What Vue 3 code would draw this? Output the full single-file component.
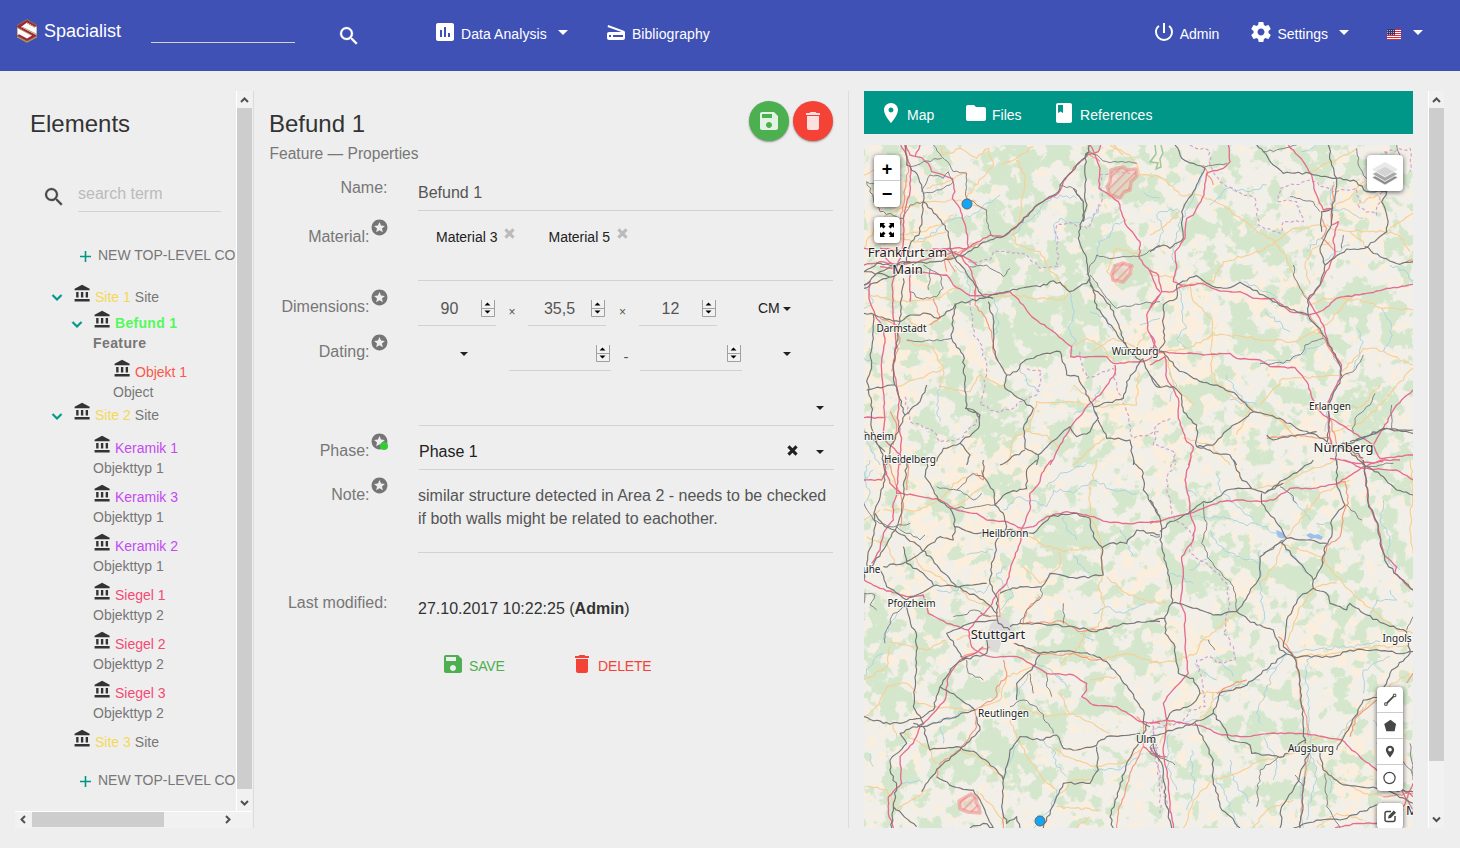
<script setup>
import { h } from 'vue'

const paths = {
  search: 'M15.5 14h-.79l-.28-.27A6.471 6.471 0 0 0 16 9.5 6.5 6.5 0 1 0 9.5 16c1.61 0 3.09-.59 4.23-1.57l.27.28v.79l5 4.99L20.49 19l-4.99-5zm-6 0C7.01 14 5 11.99 5 9.5S7.01 5 9.5 5 14 7.01 14 9.5 11.99 14 9.5 14z',
  chart: 'M19 3H5c-1.1 0-2 .9-2 2v14c0 1.1.9 2 2 2h14c1.1 0 2-.9 2-2V5c0-1.1-.9-2-2-2zM9 17H7v-7h2v7zm4 0h-2V7h2v10zm4 0h-2v-4h2v4z',
  scanner: 'M19.8 10.7L4.2 5l-.7 1.9L17.6 12H5c-1.1 0-2 .9-2 2v4c0 1.1.9 2 2 2h14c1.1 0 2-.9 2-2v-5.5c0-.8-.5-1.6-1.2-1.8zM7 17H5v-2h2v2zm12 0H9v-2h10v2z',
  power: 'M13 3h-2v10h2V3zm4.83 2.17l-1.42 1.42A6.92 6.92 0 0 1 19 12c0 3.87-3.13 7-7 7A6.995 6.995 0 0 1 7.58 6.58L6.17 5.17A8.932 8.932 0 0 0 3 12a9 9 0 0 0 18 0c0-2.74-1.23-5.18-3.17-6.83z',
  gear: 'M19.43 12.98c.04-.32.07-.64.07-.98s-.03-.66-.07-.98l2.11-1.65c.19-.15.24-.42.12-.64l-2-3.46c-.12-.22-.39-.3-.61-.22l-2.49 1c-.52-.4-1.08-.73-1.69-.98l-.38-2.65A.488.488 0 0 0 14 2h-4c-.25 0-.46.18-.49.42l-.38 2.65c-.61.25-1.17.59-1.69.98l-2.49-1c-.23-.09-.49 0-.61.22l-2 3.46c-.13.22-.07.49.12.64l2.11 1.65c-.04.32-.07.65-.07.98s.03.66.07.98l-2.11 1.65c-.19.15-.24.42-.12.64l2 3.46c.12.22.39.3.61.22l2.49-1c.52.4 1.08.73 1.69.98l.38 2.65c.03.24.24.42.49.42h4c.25 0 .46-.18.49-.42l.38-2.65c.61-.25 1.17-.59 1.69-.98l2.49 1c.23.09.49 0 .61-.22l2-3.46c.12-.22.07-.49-.12-.64l-2.11-1.65zM12 15.5c-1.93 0-3.5-1.57-3.5-3.5s1.57-3.5 3.5-3.5 3.5 1.57 3.5 3.5-1.57 3.5-3.5 3.5z',
  museum: 'M4 10v7h3v-7H4zm6 0v7h3v-7h-3zM2 22h19v-3H2v3zm14-12v7h3v-7h-3zm-4.5-9L2 6v2h19V6l-9.500-5z',
  plus: 'M19 13h-6v6h-2v-6H5v-2h6V5h2v6h6v2z',
  chevron: 'M7.410 7.840L12 12.420l4.590-4.580L18 9.250l-6 6-6-6z',
  save: 'M17 3H5c-1.110 0-2 .9-2 2v14c0 1.100.89 2 2 2h14c1.100 0 2-.9 2-2V7l-4-4zm-5 16c-1.660 0-3-1.340-3-3s1.340-3 3-3 3 1.340 3 3-1.340 3-3 3zm3-10H5V5h10v4z',
  trash: 'M6 19c0 1.100.9 2 2 2h8c1.100 0 2-.9 2-2V7H6v12zM19 4h-3.500l-1-1h-5l-1 1H5v2h14V4z',
  star: 'M11.990 2C6.470 2 2 6.480 2 12s4.470 10 9.990 10C17.520 22 22 17.520 22 12S17.520 2 11.990 2zm4.240 16L12 15.450 7.770 18l1.120-4.810-3.730-3.230 4.920-.42L12 5l1.920 4.530 4.920.42-3.730 3.230L16.230 18z',
  pin: 'M12 2C8.130 2 5 5.130 5 9c0 5.250 7 13 7 13s7-7.750 7-13c0-3.870-3.130-7-7-7zm0 9.500a2.500 2.500 0 0 1 0-5 2.500 2.500 0 0 1 0 5z',
  folder: 'M10 4H4c-1.100 0-1.990.9-1.990 2L2 18c0 1.100.9 2 2 2h16c1.100 0 2-.9 2-2V8c0-1.100-.9-2-2-2h-8l-2-2z',
  book: 'M18 2H6c-1.100 0-2 .9-2 2v16c0 1.100.9 2 2 2h12c1.100 0 2-.9 2-2V4c0-1.100-.9-2-2-2zM6 4h5v8l-2.500-1.500L6 12V4z',
  cross: 'M2.500 6.500l4-4L12 8l5.500-5.500 4 4L16 12l5.500 5.500-4 4L12 16l-5.500 5.500-4-4L8 12z',
}

const Icon = (p) =>
  h('svg', { viewBox: '0 0 24 24', width: p.size, height: p.size, fill: 'currentColor' }, [h('path', { d: paths[p.name] })])
Icon.props = ['name', 'size']

const Caret = (p) =>
  h('svg', { viewBox: '0 0 10 5', width: p.w || 8, height: p.hh || 4, fill: 'currentColor' }, [h('path', { d: 'M0 0h10L5 5z' })])
Caret.props = ['w', 'hh']

const Spinner = () =>
  h('svg', { viewBox: '0 0 14 17', width: 14, height: 17, class: 'spin-svg' }, [
    h('path', { d: 'M0 0h14v17H0z', fill: '#f2f2f2' }),
    h('path', { d: 'M.5 0v16.500h13V0M0 8.500h14', fill: 'none', stroke: '#a0a0a0' }),
    h('path', { d: 'M3.500 5.500h6L6.500 2.500zM3.500 10.500h6l-3 3z', fill: '#000' }),
  ])

const tree = [
  { name: 'Site 1', type: 'Site', color: 'yellow', level: 1, open: true, gap: 'g6' },
  { name: 'Befund 1', type: 'Feature', color: 'green', level: 2, open: true, two: true, active: true },
  { name: 'Objekt 1', type: 'Object', color: 'red', level: 3, two: true, gap: 'g3' },
  { name: 'Site 2', type: 'Site', color: 'yellow', level: 1, open: true, gap: 'g13' },
  { name: 'Keramik 1', type: 'Objekttyp 1', color: 'purple', level: 2, two: true },
  { name: 'Keramik 3', type: 'Objekttyp 1', color: 'purple', level: 2, two: true },
  { name: 'Keramik 2', type: 'Objekttyp 1', color: 'purple', level: 2, two: true },
  { name: 'Siegel 1', type: 'Objekttyp 2', color: 'pink', level: 2, two: true },
  { name: 'Siegel 2', type: 'Objekttyp 2', color: 'pink', level: 2, two: true },
  { name: 'Siegel 3', type: 'Objekttyp 2', color: 'pink', level: 2, two: true },
  { name: 'Site 3', type: 'Site', color: 'yellow', level: 1 },
]

// Woodland patches of the map: centre x, centre y, radius x, radius y
const woods = [
  [1010,170,30,25],[1060,155,35,15],[1100,170,20,25],[980,230,25,15],[1020,215,25,15],[1010,250,35,20],[1055,270,30,25],[1085,225,22,25],[1110,240,20,30],
  [1045,310,45,30],[1080,320,25,25],[1030,345,40,25],[910,195,15,15],[930,272,15,10],[960,300,20,15],[990,310,20,20],[960,380,20,30],[985,400,20,20],[1000,430,30,20],
  [930,430,20,25],[915,345,20,20],[1075,440,30,20],[1140,190,25,20],[1140,270,20,20],[1095,350,20,20],[890,155,20,12],[940,160,15,12],
  [1215,165,30,15],[1290,150,35,12],[1340,165,30,15],[1390,180,20,15],[1400,250,12,25],[1235,225,20,15],[1270,240,30,20],[1195,230,20,15],[1355,300,30,20],[1380,320,30,20],
  [1230,265,25,15],[1245,325,30,15],[1300,300,20,15],[1260,350,30,15],[1320,345,25,12],[1210,385,20,12],[1290,400,25,15],[1370,400,30,20],[1380,430,25,20],[1200,420,20,20],
  [1250,440,20,12],[1395,470,15,20],[880,640,16,50],[890,690,25,30],[945,505,20,14],[1070,530,35,20],[1060,560,35,20],[1090,570,20,12],[1080,640,50,18],[1050,650,30,12],
  [970,690,35,18],[925,640,15,35],[1000,745,40,20],[955,765,35,18],[900,790,25,20],[1050,720,25,15],[1030,775,25,20],[1100,700,30,15],[1090,790,25,20],[1010,480,20,12],
  [1135,650,20,20],[1200,510,30,18],[1175,560,15,30],[1210,580,22,18],[1250,560,20,15],[1290,580,28,18],[1330,560,25,15],[1370,520,25,25],[1400,560,12,20],[1230,620,25,15],
  [1340,610,20,20],[1240,670,20,15],[1250,730,30,18],[1300,740,22,14],[1290,700,20,15],[1200,765,20,12],[1280,790,20,15],[1350,680,15,12],[1240,800,10,20],[1370,625,20,12],
  [1330,780,14,25],[1130,500,20,15],[1120,540,15,15],[1150,600,18,14],[1260,500,18,12],[1310,500,18,12],
]

const farms = [
  [900,230,40,50],[900,320,40,60],[960,360,30,25],[990,470,60,40],[960,520,50,50],[1165,440,25,40],[1110,420,30,30],[1190,370,30,50],[1180,300,30,30],[1150,340,25,25],
  [1260,300,40,20],[1290,360,40,15],[1350,210,30,25],[1250,590,25,20],[1240,440,30,15],[1320,430,30,20],[1360,640,30,30],[1320,640,30,25],[1030,600,40,20],[1000,560,50,30],
  [920,590,25,30],[1040,670,30,20],[1190,700,20,20],[1350,770,25,40],[890,480,25,40],[1180,640,30,20],[890,400,25,40],[1140,580,25,20],[1330,510,25,15],[1100,140,20,20],
]

// Line work, drawn tile by tile at three units per pixel
const tiles = [
  {
    place: 'translate(860 85) scale(.33333)',
    water: 'M170 470L210 455 240 425 270 405 330 395 420 330M283 540L300 560 320 570 330 640 370 640M405 640L415 720 400 760M455 450L500 410 560 350 600 330 650 340M585 470L580 420 600 400 640 415 700 400 725 360M630 620L640 690 625 730 645 760 640 800M710 520L715 470 750 455 765 415 800 405M480 850L500 890 540 920M240 900L230 960 240 1010M12 820L50 835M900 340L850 320M690 680L740 700 760 740M15 600L40 650 12 670M840 720L900 700M12 1030L35 1100 60 1140M640 990L700 960 720 900',
    border: 'M325 530L390 525 400 500 450 500 500 510 540 550 595 545 590 420 640 415 680 430 725 350 720 270 780 260 830 270M330 650L340 750 365 780 380 850 360 960 410 980 460 970 480 950 530 930 545 860 500 850M660 800L680 880 760 850 770 900 785 950 800 980 820 1060 900 1040M135 935L150 1010 220 1040 240 1070 300 1060 360 1000',
    primary: 'M240 180L250 210 300 190 350 220 385 190 400 240 365 280 340 310 320 340M425 240L470 220 520 185M470 225L495 270 480 400 460 440 470 480 540 500 560 540 600 590 630 620M12 490L60 400 120 370 200 350 300 345 350 350M200 310L260 290 320 260M12 270L60 250 130 240M340 360L380 375M120 450L180 440 240 420 280 390M395 640L470 630 540 640 610 645 630 620M30 630L120 650 230 640 300 600M140 770L220 790 250 850 180 880 110 905M250 855L240 905 330 920 360 870 440 910M635 785L680 760 720 780 765 830M700 800L760 760 830 790 860 740M440 1140L460 1060 510 1030 530 950 620 950 700 960M835 860L830 960 770 960 700 965M735 1060L680 1100 640 1140M840 510L770 490 740 560 770 600M750 180L810 210 830 235 840 270 900 275M495 1040L560 1050 600 1090M760 180L790 210M640 900L690 940 720 950M140 700L180 730 235 705M70 480L100 460 180 470 260 440',
    trunk: 'M250 490L225 500M220 640L240 700 210 720M350 600L345 660 370 690 395 740 400 800 415 830M285 560L260 520 300 500 370 470M60 700L110 720 120 760 95 860M135 180L145 250 120 420M685 180L690 210 720 230M90 980L110 1020 100 1080M260 560L255 520 285 520',
    rail: 'M135 180L140 240 165 260 185 300 190 350 230 390 265 440 270 490 285 520 340 590 370 635 400 640M285 520L390 465 430 455 470 425 525 365 595 320 600 300 650 240 688 200M12 600L60 560 130 530 200 535 280 520M12 560L50 535 100 540 150 530M12 610L80 580 130 560M688 180L675 240 678 370 665 410 655 460 680 520 685 570 700 620 710 670 760 730 800 785 830 820 850 825 870 870 900 905M235 700L295 655 370 640 440 620 510 605 560 600 570 590 600 592 628 620 680 595 690 575M12 685L45 690 120 710 150 690 200 685 235 700M130 580L120 710 100 850 105 900 135 990 90 1090 80 1140M40 690L40 760 30 810 35 850 20 890 35 950 35 1030 60 1090 75 1140M190 350L180 440 150 480 140 530M12 560L100 575M385 650L400 700 400 780 410 820 440 870 435 910 520 970 490 1030 495 1090 535 1110 570 1075 630 1025 650 1055 690 1040 715 1000 700 965 665 900 655 875 620 870 600 800 540 810 490 830 470 860 440 870M285 655L275 760 310 810 318 970 360 990 355 1030 300 1075 330 1110 320 1140M315 970L340 975 360 1000M700 965L790 940 800 890 850 820M700 965L740 1060 810 1065 820 1140M640 310L670 350 670 410M690 600L750 660 790 760 800 790M20 915L105 900M75 1100L12 1040M135 990L180 950 200 900M535 1110L530 1140M230 1130L250 1090 300 1075M420 1140L495 1095',
    minor: 'M220 180L245 215 270 240 280 260 320 265 320 340 380 375 385 430 400 455M600 300L640 310 670 350M680 570L710 510 760 520 800 515 850 510 900 480M690 570L740 640 770 670 850 655 900 650M690 200L740 230 830 235M140 765L220 768 275 760M150 620L180 640 230 635 250 610 240 570 190 540M185 320L210 270 250 280 265 260 280 290 250 310 190 325M60 300L20 290 40 340 60 380 130 400 150 360 190 350M330 545L380 540 410 560 430 575 450 550M205 615L210 550M245 220L190 230 150 245',
    motorway: 'M122 180L140 215 152 250 150 320 140 355 130 400 130 450 128 500 105 560 96 600 100 700 108 770 100 850 110 905 118 950 112 1000 125 1060 120 1140M138 180L150 210 185 218 205 235 215 260 250 270 277 280 285 320 277 340 300 370 318 430 325 485 300 510 330 550 348 600 345 630M180 180L165 215M60 490L150 500 265 490 320 490 390 450 430 455 480 415 530 360 595 325 610 290 650 240 685 208 715 200 722 180M690 180L705 210 720 250 717 310 775 350 795 415 840 470 838 520 870 560 890 610 900 620M60 545L150 560 210 565 260 570 280 600 330 632 400 628 450 620 490 660 515 695 580 740 635 785 632 815 740 815 760 835 850 830 900 800M765 840L765 865 720 930 690 955 630 1030 600 1080 570 1140M12 600L30 590 27 640 45 690 65 720 75 760 65 830 70 920 75 1000 70 1060 120 1110M12 998L75 998M900 630L880 650 860 690 865 740 885 770 880 800M12 540L60 530 130 540 290 500M250 490L320 520 350 540M150 650L150 560M12 490L60 500 120 560',
  },
  {
    place: 'translate(1150 85) scale(.33333)',
    water: 'M160 250L130 340 90 410 70 500 80 590M20 480L40 440 20 390 60 370 90 380M180 360L200 340 230 310 300 320 350 300M390 650L350 620 280 590M90 600L95 680 110 730 80 760 110 790M345 680L420 740M470 690L520 750 560 830 575 870 540 950 525 1040M330 830L420 830 480 790 530 770M620 730L640 770 610 860M695 670L725 720 720 770 700 800M520 530L560 500 600 480M540 380L580 370 640 400M240 945L320 960M720 540L770 560 789 600M230 870L250 910 300 970M60 860L80 900 60 950M560 960L620 970M550 290L540 360M470 500L520 450 540 430M560 1090L640 1060 690 1040M455 200L500 180',
    border: 'M120 180L180 200 180 240 210 290 260 320 315 340 325 420 390 445 400 410 460 410 440 350 385 350 390 310 480 285 550 320 620 310 630 370 680 390 690 330 740 250 700 200 780 190 780 260M60 1000L20 1020 10 1080 70 1100 75 1140',
    primary: 'M12 270L50 290 90 330 150 330 230 370 310 430 375 470 430 430 530 420 560 435 700 440 745 450 780 500M375 470L330 500 220 530 190 590 120 595M375 470L410 520 440 590 475 640M120 595L130 650 185 700 185 850 195 890M0 810L110 790 190 750 280 755 350 765 430 770 490 740 520 750M330 960L400 880 520 875 600 870M360 980L420 1040M300 970L260 1050M480 660L520 640 590 640 650 650 700 670 789 675M575 860L640 790 680 790 720 810 789 840M480 260L560 225 620 190M480 600L465 540 490 490 540 470M620 360L680 330 700 360M0 450L60 410 90 380M720 430L789 385M540 1040L640 1010 700 950 789 850M100 1060L180 1080 240 1140M540 370L600 340 640 290M195 890L260 940 310 975M600 440L640 470 645 490M0 570L70 575M490 740L540 710 600 640M45 810L70 900 130 960M310 975L400 1010 440 1060M560 980L640 960 690 900',
    trunk: 'M550 300L545 370 520 380M550 1090L540 1060 420 1050 350 1060M515 400L530 430 515 460 560 500M570 840L520 760 480 690M540 1000L560 1080 600 1090 640 1130M770 530L789 525M160 240L190 300M90 600L130 600',
    rail: 'M0 500L40 480 60 490 100 460 95 380 130 320 165 250 130 235 95 220 75 180M80 600L140 572 190 605 240 608 270 592 340 630 400 665 475 690 520 750 565 830 577 875 540 950 535 1040 530 1080M475 690L475 640 510 600 525 540 590 492 645 490 710 440 712 400 695 350 710 320 650 320 620 290 560 280 480 265 400 265 370 240 340 200 320 180M535 180L545 240 560 290 548 370 540 430 510 490 525 540M0 790L40 800 80 850 130 880 210 905 260 930 310 980 390 1000 440 1030 500 1050 550 1080 600 1075 700 1030 789 1035M0 870L20 905 70 905 95 930 100 980 140 1020 140 1085 190 1080 240 1030 310 980M140 1085L200 1105 240 1110 260 1140M80 600L80 640 40 660 40 720 45 770 25 800M645 485L690 515 750 538 789 530M550 1080L600 1100 640 1140M600 1070L640 1060 710 1030 789 1045M515 440L515 380 545 370M560 1090L560 1140M600 1090L640 1120M350 1050L370 1065 500 1040',
    minor: 'M420 335L490 350 510 380M580 450L575 490M430 540L430 570 450 610 475 645M330 835L400 835 460 800 465 780 520 760M577 875L610 860 640 810M610 1040L615 1000 660 960 675 925M620 190L625 240 650 280M340 200L380 195 440 180M740 180L750 210 740 260M725 1030L725 960M165 245L230 235',
    motorway: 'M235 180L240 230 220 250 170 265 162 330 130 390 110 400 105 460 75 500 80 550 70 590 100 605 155 595 210 618 270 620 310 640 370 640 420 680 475 690 520 675 560 640 650 625 720 610 789 598M415 180L460 230 485 270 495 320 520 375 540 370M545 370L545 420 565 410 550 460 555 510 540 540 510 600 475 645 495 680 520 720 545 800 575 840 570 880 535 950 535 1020 545 1090M0 555L25 570 35 620 70 620 95 605M0 670L35 620M25 800L110 805 160 810 200 808 240 805 260 820 330 825 360 845 435 848 470 890 495 960 520 990 540 1000 640 1060 670 1080 700 1030 740 960 789 915M0 750L20 790 0 800M0 840L45 815 50 880 85 940 85 1000 110 1070 130 1085 115 1140M670 1080L690 1120 789 1110M540 1120L620 1135 700 1130',
  },
  {
    place: 'translate(860 460) scale(.33333)',
    water: 'M30 0L12 40 30 100 12 130M410 410L430 380 410 340 440 320M420 450L460 410 440 370 410 400M430 150L480 110 560 140 580 90 640 100 700 60 760 90 830 100M560 80L600 40 680 10M610 170L620 210 650 240M640 290L690 340M780 210L800 250 820 290M700 460L740 440 790 460 860 430M230 390L270 400 310 380 370 400 390 370M320 285L400 270M70 540L90 490 130 430M12 650L40 600 70 580M470 710L510 630 530 610 600 650 620 680M190 800L280 770 340 740M240 800L250 850M480 840L460 880 430 960M540 840L580 870 590 920 620 950M120 970L180 960M700 930L770 930 850 880M12 60L40 30M700 540L660 520M580 640L610 660M30 880L40 920M590 990L570 1050 520 1104',
    border: 'M880 780L885 860 897 950 900 1060M870 870L900 860',
    primary: 'M710 0L690 90 690 160 720 240 730 340 715 380 735 440 715 500 670 520 660 560 600 610M70 150L180 150 240 120 280 70 350 40M470 200L540 250 610 275 700 260M490 320L540 370 600 320 600 275M740 350L800 400 870 430M12 660L80 620 90 560M90 545L200 570 260 540M160 280L190 330 240 350 280 390M12 770L50 740 80 680 140 670 170 700M170 730L230 740 340 750M350 750L420 720 440 650 520 620M450 780L470 830 500 890 550 960 590 990M480 740L560 770 640 760 700 790 750 820M630 760L600 700M130 820L200 860 230 910M20 980L80 990 110 1050M110 1050L200 990M590 1040L720 1050M580 860L620 890 700 920 790 910 840 870M360 1000L430 1080M700 960L640 960 600 1000M100 790L110 830M12 180L60 150M640 580L710 600 800 580 900 610M690 660L770 650M280 140L330 110 370 80M400 440L330 420 300 390M20 230L80 250 110 320M290 540L370 510M300 870L370 900 430 960M650 1104L690 1070',
    trunk: 'M85 0L110 80 130 130 120 200M145 0L140 90M350 40L370 60 365 30M415 400L420 470 390 470 360 460M490 490L500 450 540 410M480 490L610 485 655 515 760 500M460 550L530 580 590 585 640 580 700 600 740 600M430 600L440 650 410 680 410 710 345 750 350 800 300 870 240 910 230 950M300 590L340 580 390 560M430 1104L430 1060M850 860L810 940 795 1000 775 1050 770 1104M850 860L850 790 830 770',
    rail: 'M70 0L75 60 45 150 45 200 20 310M45 160L75 200 105 210 180 260 290 380 370 420 410 460 415 490 450 510M140 0L125 160 110 200 70 270 20 340M12 360L20 310M205 0L195 50 215 80 235 120 270 145 285 180 280 240 240 230 180 280 130 310 70 320M370 0L370 50 400 90 405 135 430 160 440 200 410 240 405 280 395 320 390 370 410 410 412 460M405 135L440 100 500 85 500 30 530 0M285 200L340 220 400 220M440 210L520 220 570 170 640 160 690 175 700 230 725 260 730 345 650 355 570 340 545 380 480 380 420 400M725 265L750 250 800 250 830 210 900 225M140 420L230 375 300 380 380 370M130 260L140 310 190 340 220 375M60 330L80 380 110 400 140 420M450 500L480 490 540 490 640 500 710 515 790 490 900 485M465 550L540 580 640 575 700 585 740 605 780 650 850 750 850 790 870 800M410 480L330 490 260 520 300 580 310 600 380 580 380 540M540 585L515 630 470 670 470 720M320 590L280 620 240 680 220 750 190 770 120 790 70 790 12 770M140 430L150 480 170 530 170 630 160 740 190 790 120 820 140 850 90 900 90 930 110 980 100 1040 95 1104M240 680L290 710 345 750 190 800 160 790M190 800L210 870 290 860 350 880 410 930 430 960 425 1040 440 1090 470 1070 480 1104M350 770L360 810 320 850 300 870 240 920 185 995M230 950L280 980 340 990 370 1040 400 1104M430 960L450 870 480 830 540 840 590 825 610 865 650 870 700 860 740 830 840 820M710 860L715 930 690 970 610 970 590 1010 550 1104M760 1104L750 1070 780 980 800 910 830 860 850 830 860 790M100 1040L170 1100M820 0L850 40 850 90 900 170M330 1104L370 1090 400 1104',
    minor: 'M12 130L40 180 90 200 150 190M110 200L180 240 195 225M140 440L100 460 80 510 75 550M12 400L45 405 30 435 50 450M230 80L290 90 340 120 365 100M290 90L340 40 370 50M270 145L350 140 405 135M280 470L310 465 340 450 390 470M610 430L610 490M545 380L545 410 500 450 480 490M510 640L520 700M560 640L560 680 575 710M320 600L325 640 370 660M450 740L490 720 530 740 570 800 580 820M12 480L15 400M850 850L880 840 870 880 900 900',
    motorway: 'M12 60L65 60 80 40 70 0M118 0L110 100 160 105 240 120 290 150 350 160 380 180 440 185 485 205 520 200 560 170 620 155 680 165 740 185 800 190 900 185M485 205L510 150 510 100 540 65 545 40 575 0M485 205L480 250 460 300 440 370 410 400 390 440 350 480 325 510 335 560 345 570M110 105L100 130 100 180 70 220 60 270 35 310M12 360L60 385 140 410 190 405 205 460 260 490 325 510M345 570L390 590 470 590 510 610 560 640 640 645 680 670 680 690 665 710 700 735 770 740 840 785 900 790M370 560L345 580 300 600 265 650 255 720 220 760 180 800 160 850 120 890 125 970 85 1010 85 1060 100 1104M850 860L890 890 900 885M75 30L90 70 125 100',
  },
  {
    place: 'translate(1150 460) scale(.33333)',
    water: 'M110 170L220 170 280 190 350 200 395 235M200 40L210 90 260 140 310 180M395 80L440 130 480 180M180 210L200 250 260 290 330 310M330 270L330 400 345 480M120 330L180 290M400 250L440 300 470 340M410 580L480 570 600 560 690 545M490 590L470 600 470 700 480 820 480 900 450 980 460 1104M350 640L390 610 410 585M380 620L320 760 330 790M190 720L250 680 330 660M135 610L170 640 200 660M60 820L50 900 80 990M700 120L690 180 720 230 715 300 750 330M640 700L640 630 720 590M720 390L740 420 680 420 660 460M480 880L500 920 490 990 470 1080M540 930L540 1000M0 820L60 790 150 780M200 590L250 650M240 900L250 960 300 1030M560 840L620 760 640 740M670 780L700 830 740 880M540 190L500 190M140 110L110 90M60 340L130 370M340 830L380 900 370 960M190 950L230 1010 260 1104M125 870L130 1000 110 1050',
    border: 'M75 0L50 60 65 160 90 190 130 220 120 280 180 320 230 370 240 430 220 520 250 560 255 600 200 610 180 590 140 600 160 680 165 740 120 750 90 790 20 800M10 800L20 890 30 950 60 1060',
    primary: 'M310 85L400 70 480 30 560 0M410 230L460 170 510 100 600 60M395 250L380 310 330 370M400 255L450 270 510 290 560 350 630 420 690 470 740 510M490 390L450 440 410 550M0 425L50 430M0 610L80 600 140 580 150 550 220 490 260 460M180 540L150 545M430 590L550 580 670 560 780 560M150 700L250 690 290 660M130 790L180 750 190 700M190 960L260 940 330 900 400 890 440 870M190 960L130 1020 100 1104M440 870L500 830M500 900L540 950 640 1000 700 1010M780 0L789 80 780 200 789 280M560 370L500 380 490 390M570 840L620 770 680 700 780 640M480 840L520 830 570 840M310 1104L350 1050 430 1020M640 1080L560 1060 500 1104M789 520L740 510M60 780L30 850',
    trunk: 'M560 70L585 65 595 130 580 160 570 230 530 260 520 310M385 530L410 555 440 600 450 660 450 720 470 770 475 830M475 880L460 980 450 1104M200 700L260 665 290 660M600 830L620 770 680 720M789 640L770 670M700 1010L789 1000',
    rail: 'M0 120L20 150 35 200 30 240 50 320 65 380 65 430 45 470 45 520 75 560 85 640 130 655 150 700 130 730 60 760 50 780M30 215L60 185 115 160 160 125 185 125 230 90 300 85 345 100 400 60 450 30 490 0M250 0L270 50 305 85M335 100L335 130 385 195 410 235 395 250 440 300 490 360 490 385 530 400 540 430 590 450 600 430 640 460 700 490 770 515M345 100L400 70M410 235L470 240 530 250M560 0L560 70 585 135 545 180 545 230 525 260 515 320 490 360M490 385L450 410 410 480 400 560 430 590 448 640 455 740 465 850M430 590L550 590 600 570 670 570 760 580 789 575M395 245L330 290 330 350 260 455 190 465 140 445 85 430 65 430M260 455L320 495 370 510 390 570 430 590M640 0L655 130 685 200 690 250 710 310 750 355 789 390M640 10L700 50 740 90 789 105M410 580L280 680 210 700 190 760 130 790 0 830M190 760L220 800 240 840 300 855 305 880 400 890 420 870 465 840M480 870L440 970 395 1040 390 1104M465 950L450 1104M510 870L520 930 570 970 680 985 789 995M135 790L160 840 190 900 190 960 210 1040 270 1104M430 1104L500 1080 570 1080 700 1030 760 1050M0 830L40 930 50 1040 65 1104M770 515L780 580 720 640 690 710 640 720 600 800 560 870M710 990L789 1030M0 485L45 475',
    minor: 'M160 130L170 200 155 250 180 300 215 340 250 380 260 455M400 240L340 280M385 890L330 930 320 1040M390 80L420 100 440 130M590 135L635 180M525 940L530 1040 570 1104M435 945L460 980M175 540L195 570M10 880L50 900 75 915M0 225L30 230M645 20L730 10M789 470L770 510M680 850L740 880 789 940M780 850L789 960',
    motorway: 'M120 0L105 60 120 130 120 160 75 170 0 190M120 160L160 145 210 125 280 120 330 125 370 120 420 85 490 85 560 72 640 20 700 0M120 160L135 200 130 240 95 290 100 350 90 430 105 460 105 560 115 640 60 700 40 730 50 780 40 880 55 960 60 1040 70 1104M580 0L640 25 740 30 789 60M640 0L655 130 685 200 700 280 740 320 735 340 789 390M0 790L50 780 100 790 160 800 215 825 290 830 360 820 470 822 540 835 575 840 640 900 680 930 789 1010M555 1104L620 1090 700 1090M700 0L750 0M0 860L20 890 50 890M740 970L789 1050M760 1040L789 970',
  },
]

const layers = ['water', 'border', 'primary', 'trunk', 'motorway', 'minor', 'rail']

const amplitude = { water: 6, border: 5, primary: 4, trunk: 3, motorway: 2, minor: 4, rail: 3.5 }

// Breaks each straight run into short steps pushed sideways, so that the lines wind like roads do
let seed = 11
const random = () => {
  seed = (seed * 16807) % 2147483647
  return seed / 2147483647 - 0.5
}
function wind(d, amp) {
  return d
    .split('M')
    .filter(Boolean)
    .map((run) => {
      const n = run.split(/[ L]/).map(Number)
      let out = `M${n[0]} ${n[1]}L`
      for (let i = 2; i < n.length; i += 2) {
        const [x0, y0, x1, y1] = n.slice(i - 2, i + 2)
        const len = Math.hypot(x1 - x0, y1 - y0) || 1
        const steps = Math.max(1, Math.round(len / 11))
        for (let s = 1; s < steps; s++) {
          const o = random() * 2 * amp
          out += `${(x0 + ((x1 - x0) * s) / steps - ((y1 - y0) / len) * o).toFixed(1)} ${(y0 + ((y1 - y0) * s) / steps + ((x1 - x0) / len) * o).toFixed(1)} `
        }
        out += `${x1} ${y1} `
      }
      return out
    })
    .join('')
}
const ways = layers.map((kind) => ({ kind, lines: tiles.map((t) => ({ place: t.place, d: wind(t[kind], amplitude[kind]) })) }))

const cities = [
  ['Frankfurt am', 907.5, 257, 13], ['Main', 907.5, 274, 13], ['Darmstadt', 901.5, 332, 10], ['Würzburg', 1135, 355, 10],
  ['nheim', 879, 440, 10], ['Heidelberg', 910, 463, 10], ['Erlangen', 1330, 409.500, 10], ['Nürnberg', 1343.500, 451.500, 13],
  ['Heilbronn', 1005, 537, 10], ['uhe', 871.500, 573, 10], ['Pforzheim', 911.500, 607, 10], ['Stuttgart', 998, 639, 13],
  ['Ingols', 1397, 642, 10], ['Reutlingen', 1003.500, 717, 10], ['Ulm', 1146, 743, 10.500], ['Augsburg', 1311, 751.500, 10], ['M', 1412, 815, 13],
]
</script>

<template>
  <div class="page">
    <header class="bar">
      <div class="brand">
        <svg width="22" height="24" viewBox="0 0 22 24">
          <path d="M11 0l10 6v12l-10 6-10-6V6z" fill="#8a7a4e" />
          <path d="M11 2.500l9.500 5v9L11 21.500 1.500 16.500v-9z" fill="#fff" />
          <path d="M1 7l10-6 10 6-2 1-8-4.500L5 8l16 8.500-10 5.500L1 16.500l2-1.200 8 4.200 5-3L1 8.500z" fill="#a32638" />
          <path d="M1 8.500l15 8M5 7.500l16 8M11 4l8 4.500M1 18l10 5 10-5" fill="none" stroke="#b09a68" />
        </svg>
        <span>Spacialist</span>
      </div>
      <div class="bar-input"></div>
      <Icon class="bar-search bold" name="search" size="24" />
      <div class="nav analysis"><Icon name="chart" size="24" /><span>Data Analysis</span><Caret w="10" hh="5" /></div>
      <div class="nav biblio"><Icon name="scanner" size="24" /><span>Bibliography</span></div>
      <div class="grow"></div>
      <div class="nav admin"><Icon name="power" size="24" /><span>Admin</span></div>
      <div class="nav settings"><Icon name="gear" size="24" /><span>Settings</span><Caret w="10" hh="5" /></div>
      <div class="nav lang">
        <svg width="14" height="11" viewBox="0 0 14 11">
          <path d="M0 0h14v11H0z" fill="#fff" />
          <path d="M0 .5h14M0 2.500h14M0 4.500h14M0 6.500h14M0 8.500h14M0 10.500h14" stroke="#e0263a" />
          <path d="M0 0h8v6H0z" fill="#34386f" />
          <path d="M0 1.500h8M0 3.500h8M0 5.500h8" stroke="#a9abc8" stroke-dasharray="1 1" />
        </svg>
        <Caret w="10" hh="5" />
      </div>
    </header>

    <main class="columns">
      <aside class="left">
        <div class="left-top">
          <div class="elements">
            <h3>Elements</h3>
            <div class="find"><Icon class="bold" name="search" size="24" /><div class="find-input">search term</div></div>
            <div class="new"><Icon name="plus" size="19" /><span>NEW TOP-LEVEL CO</span></div>
            <div v-for="n in tree" :key="n.name" class="node" :class="['lv' + n.level, n.gap, { active: n.active }]">
              <div class="fold"><Icon v-if="n.open" name="chevron" size="20" /></div>
              <div class="node-body">
                <div class="node-line">
                  <Icon name="museum" size="19" /><span :class="n.color">{{ n.name }}</span><span v-if="!n.two" class="kind">{{ n.type }}</span>
                </div>
                <div v-if="n.two" class="kind">{{ n.type }}</div>
              </div>
            </div>
            <div class="new last"><Icon name="plus" size="19" /><span>NEW TOP-LEVEL CO</span></div>
          </div>
          <div class="vscroll">
            <svg width="9" height="17" viewBox="0 0 9 17"><path d="M1 11l3.500-3.500L8 11" /></svg>
            <div class="thumb"></div>
            <svg width="9" height="22" viewBox="0 0 9 22"><path d="M1 12l3.500 3.500L8 12" /></svg>
          </div>
        </div>
        <div class="hscroll">
          <svg width="17" height="15" viewBox="0 0 17 15"><path d="M10 4L6.500 7.500l3.500 3.500" /></svg>
          <div class="hthumb"></div>
          <svg width="17" height="15" viewBox="0 0 17 15"><path d="M7 4l3.500 3.500L7 11" /></svg>
        </div>
      </aside>

      <section class="middle">
        <div class="head">
          <div><h3>Befund 1</h3><p>Feature — Properties</p></div>
          <div class="round save"><Icon name="save" size="24" /></div>
          <div class="round del"><Icon name="trash" size="24" /></div>
        </div>

        <div class="row r-name"><label>Name:</label><div class="field line">Befund 1</div></div>

        <div class="row r-mat">
          <label>Material:<Icon name="star" size="19" /></label>
          <div class="field line tags">
            <span>Material 3</span><Icon name="cross" size="13" />
            <span>Material 5</span><Icon name="cross" size="13" />
          </div>
        </div>

        <div class="row r-dim">
          <label>Dimensions:<Icon name="star" size="19" /></label>
          <div class="field dims">
            <div class="num"><span>90</span><Spinner /></div><i>×</i>
            <div class="num"><span>35,5</span><Spinner /></div><i>×</i>
            <div class="num"><span>12</span><Spinner /></div>
            <div class="unit">CM<Caret /></div>
          </div>
        </div>

        <div class="row r-date">
          <label>Dating:<Icon name="star" size="19" /></label>
          <div class="field dates">
            <Caret class="c1" />
            <div class="num wide"><span></span><Spinner /></div><i>-</i>
            <div class="num wide"><span></span><Spinner /></div>
            <Caret class="c2" />
          </div>
        </div>

        <div class="row r-sel"><label></label><div class="field line pick"><Caret /></div></div>

        <div class="row r-phase">
          <label>Phase:<span class="badge"><Icon name="star" size="19" /><b></b></span></label>
          <div class="field line pick"><span>Phase 1</span><Icon name="cross" size="13" /><Caret /></div>
        </div>

        <div class="row r-note">
          <label>Note:<Icon name="star" size="19" /></label>
          <div class="field line">similar structure detected in Area 2 - needs to be checked<br />if both walls might be related to eachother.</div>
        </div>

        <div class="row r-mod"><label>Last modified:</label><div class="field">27.10.2017 10:22:25 (<b>Admin</b>)</div></div>

        <div class="actions">
          <div class="act-save"><Icon name="save" size="24" /><span>SAVE</span></div>
          <div class="act-del"><Icon name="trash" size="24" /><span>DELETE</span></div>
        </div>
      </section>

      <section class="right">
        <nav class="tabs">
          <div class="t1"><Icon name="pin" size="24" /><span>Map</span></div>
          <div class="t2"><Icon name="folder" size="24" /><span>Files</span></div>
          <div class="t3"><Icon name="book" size="24" /><span>References</span></div>
        </nav>
        <div class="map">
          <svg class="canvas" width="549" height="683" viewBox="864 145 549 683">
            <defs>
              <filter id="wood" filterUnits="userSpaceOnUse" x="864" y="145" width="549" height="683" color-interpolation-filters="sRGB">
                <feGaussianBlur in="SourceGraphic" stdDeviation="7" result="b" />
                <feTurbulence type="fractalNoise" baseFrequency=".06" numOctaves="5" seed="4" />
                <feColorMatrix values="0 0 0 0 0 0 0 0 0 0 0 0 0 0 0 1 0 0 0 0" result="n" />
                <feComposite in="b" in2="n" operator="arithmetic" k2=".22" k3="1" />
                <feComponentTransfer result="m"><feFuncA type="linear" slope="16" intercept="-9.500" /></feComponentTransfer>
                <feFlood flood-color="#d4e7cd" />
                <feComposite in2="m" operator="in" />
              </filter>
              <filter id="farm" filterUnits="userSpaceOnUse" x="864" y="145" width="549" height="683" color-interpolation-filters="sRGB">
                <feGaussianBlur in="SourceGraphic" stdDeviation="8" result="b" />
                <feTurbulence type="fractalNoise" baseFrequency=".09" numOctaves="4" seed="21" />
                <feColorMatrix values="0 0 0 0 0 0 0 0 0 0 0 0 0 0 0 1 0 0 0 0" result="n" />
                <feComposite in="b" in2="n" operator="arithmetic" k2=".18" k3="1" />
                <feComponentTransfer result="m"><feFuncA type="linear" slope="10" intercept="-5.900" /></feComponentTransfer>
                <feFlood flood-color="#fbeedc" />
                <feComposite in2="m" operator="in" />
              </filter>
              <pattern id="hatch" width="7" height="7" patternUnits="userSpaceOnUse" patternTransform="rotate(45)">
                <path d="M0 0h7v7H0z" fill="#f2b8b0" fill-opacity=".35" />
                <path d="M0 0v7" stroke="#e8a49c" stroke-width="3" />
              </pattern>
            </defs>
            <path d="M864 145h549v683H864z" fill="#f2efe9" />
            <g filter="url(#farm)"><ellipse v-for="(f, i) in farms" :key="i" :cx="f[0]" :cy="f[1]" :rx="f[2]" :ry="f[3]" /></g>
            <g filter="url(#wood)"><ellipse v-for="(f, i) in woods" :key="i" :cx="f[0]" :cy="f[1]" :rx="f[2]" :ry="f[3]" /></g>
            <path d="M990 625l10-10 8 6 6 8-4 8-8 4-4 12-8-2-4-12z" fill="#dddbd9" />
            <path d="M1276 530l8 3 2 6-8-2zM1306 535l4-2 5 2 3-1 5 3-2 3-6-2-4 1z" fill="#9cc0ea" />
            <g v-for="w in ways" :key="w.kind" :class="['way', w.kind]">
              <path v-for="(l, i) in w.lines" :key="i" :d="l.d" :transform="l.place" />
            </g>
            <path d="M1155 145l1 9-6 8 8 1-2 6 5-2-1-8 3-6-2-8" fill="none" stroke="#9cc99c" stroke-width="1.500" />
            <g class="zones">
              <path d="M1111 170l12-3 4 3 9-1 1 7-6 6-1 8-6 2-4 6-10-3-3-8 3-5z" />
              <path d="M1115 266l8-3 9 3-2 8-7 8-10-2-1-7z" />
              <path d="M959 801l12-7 6 4-1 4 3 5 1 6-12-1-8-3z" />
            </g>
            <g class="spots"><circle cx="967" cy="204" r="5" /><circle cx="1040" cy="821" r="5" /></g>
            <g class="cities">
              <text v-for="c in cities" :key="c[0]" :x="c[1]" :y="c[2]" :font-size="c[3]">{{ c[0] }}</text>
            </g>
          </svg>

          <div class="ctl zoomer"><span>+</span><span>−</span></div>
          <div class="ctl full">
            <svg width="16" height="16" viewBox="0 0 16 16"><path d="M1 1h5L4.500 2.500l2 2-2 2-2-2L1 6zM15 1h-5l1.500 1.500-2 2 2 2 2-2L15 6zM1 15h5l-1.500-1.500 2-2-2-2-2 2L1 10zM15 15h-5l1.500-1.500-2-2 2-2 2 2L15 10z" /></svg>
          </div>
          <div class="ctl layers">
            <svg width="28" height="27" viewBox="0 0 28 27">
              <path d="M1 17.500l13-7 13 7-13 7.500z" fill="#8c8c8c" stroke="#fff" stroke-width=".6" />
              <path d="M1 14l13-7 13 7-13 7.500z" fill="#a8a8a8" stroke="#fff" stroke-width=".8" />
              <path d="M1 9.500L14 2l13 7.500L14 17z" fill="#d4d4d4" stroke="#fff" stroke-width=".8" />
              <path d="M1 9.500L14 2l13 7.500-4 2.300L14 7l-9 4.800z" fill="#e9e9e9" />
            </svg>
          </div>
          <div class="ctl draw">
            <svg viewBox="0 0 26 26"><path d="M8.500 18l9-9" stroke="#464646" stroke-width="1.800" /><path d="M7.500 16.500h2.500v2.500H7.500zM16.500 7.500h2.500V10h-2.500z" fill="#fff" stroke="#464646" /></svg>
            <svg viewBox="0 0 26 26"><path d="M7 11.500l6.500-4.500 5.800 4.500-1.500 7.500H9.200z" fill="#464646" /></svg>
            <svg viewBox="0 0 26 26"><path d="M13 7c-2.600 0-4.300 1.800-4.300 4.200 0 3 4.300 8 4.300 8s4.300-5 4.300-8C17.300 8.800 15.600 7 13 7zm0 6a1.900 1.900 0 1 1 0-3.800 1.900 1.900 0 0 1 0 3.800z" fill="#464646" /></svg>
            <svg viewBox="0 0 26 26"><circle cx="12.500" cy="13" r="5.600" fill="none" stroke="#464646" stroke-width="1.200" /></svg>
          </div>
          <div class="ctl edit">
            <svg viewBox="0 0 26 26"><path d="M14 8.500H10a2 2 0 0 0-2 2v6a2 2 0 0 0 2 2h6a2 2 0 0 0 2-2V13" fill="none" stroke="#464646" stroke-width="1.500" /><path d="M11 15.500l.6-2.800 5.200-5.200 2.200 2.200-5.200 5.200z" fill="#464646" /></svg>
          </div>
        </div>
      </section>

      <div class="vscroll outer">
        <svg width="9" height="17" viewBox="0 0 9 17"><path d="M1 11l3.500-3.500L8 11" /></svg>
        <div class="thumb"></div>
        <svg width="9" height="17" viewBox="0 0 9 17"><path d="M1 6.500L4.500 10 8 6.500" /></svg>
      </div>
    </main>
  </div>
</template>

<style>
body { background: #eee; overflow: hidden; }
</style>

<style scoped>
.page { width: 1460px; height: 848px; font-family: 'Liberation Sans', Arial, sans-serif; font-size: 14px; line-height: 20px; color: #777; background: #eee; overflow: hidden; }
svg { display: block; flex: none; }
h3 { margin: 0; font-size: 24px; line-height: 26px; font-weight: 400; color: #333; }
p { margin: 0; }
.bold { stroke: currentColor; stroke-width: .25px; }

.bar { height: 71px; box-sizing: border-box; background: #3f51b5; color: #fff; display: flex; align-items: flex-start; padding: 0 37px 0 16px; white-space: nowrap; }
.brand { display: flex; gap: 6px; margin-top: 19px; font-size: 18px; line-height: 24px; width: 135px; }
.bar-input { width: 144px; height: 42px; border-bottom: 1px solid #d2d2d2; }
.bar-search { margin: 24px 0 0 42px; }
.nav { display: flex; }
.nav > svg:first-child { margin-top: 20px; }
.nav span { margin: 24px 0 0 4px; }
.nav > svg:last-child { margin-top: 30px; }
.analysis { margin-left: 72px; }
.analysis svg:last-child { margin-left: 11px; }
.biblio { margin-left: 36px; }
.biblio span, .analysis span { letter-spacing: .08px; }
.grow { flex: 1; }
.admin { margin-right: 30px; }
.settings svg:last-child { margin-left: 11px; }
.lang { margin-left: 38px; gap: 12px; }
.lang > svg:first-child { margin-top: 29px; }

.columns { display: flex; height: 737px; padding: 20px 15px 0; }
.left { width: 238px; height: 737px; border-right: 1px solid #ddd; display: flex; flex-direction: column; flex: none; }
.left-top { display: flex; height: 720px; }
.elements { width: 220px; overflow: hidden; padding-top: 20px; box-sizing: border-box; white-space: nowrap; }
.elements h3 { padding-left: 15px; }
.find { display: flex; padding-left: 27px; margin-top: 36px; color: #4a4a4a; height: 39px; }
.find > svg { margin-top: 12px; }
.find-input { width: 143px; margin-left: 12px; height: 38px; font-size: 16px; line-height: 42px; color: #bbb; border-bottom: 1px solid #d2d2d2; }
.new { display: flex; padding-left: 61px; margin-top: 33px; color: #777; height: 20px; margin-bottom: 22px; }
.new svg { color: #009688; margin-top: 2px; }
.new span { margin-left: 3px; }
.new.last { margin-top: 18px; }
.node { display: flex; margin-bottom: 9px; }
.g6 { margin-bottom: 6px; }
.g3 { margin-bottom: 3px; }
.g13 { margin-bottom: 13px; }
.lv1 { padding-left: 32px; }
.lv2 { padding-left: 52px; }
.lv3 { padding-left: 72px; }
.fold { width: 26px; height: 20px; color: #009688; }
.fold svg { margin-top: 1px; stroke: currentColor; stroke-width: .6px; }
.lv2 .fold svg, .g13 .fold svg { margin-top: 2px; }
.node-line { display: flex; height: 20px; gap: 4px; }
.node-line > svg { margin: -3px -1px 0 0; color: #333; }
.kind { color: #777; }
.active .node-line span { letter-spacing: .3px; }
.active { font-weight: 700; }
.active .kind { letter-spacing: .4px; }
.yellow { color: #f5d858; }
.green { color: #53f95b; }
.red { color: #f9584c; }
.purple { color: #c34af2; }
.pink { color: #f34a74; }

.vscroll { width: 15px; border-left: 1px solid #fff; background: #f1f1f1; display: flex; flex-direction: column; align-items: center; }
.vscroll path, .hscroll path { fill: none; stroke: #505050; stroke-width: 2; }
.thumb { width: 15px; flex: 1; background: #cdcdcd; }
.left .vscroll { margin-left: 1px; }
.hscroll { height: 16px; width: 237px; border-top: 1px solid #fff; background: #f1f1f1; display: flex; align-items: flex-start; }
.hthumb { width: 132px; height: 15px; background: #cdcdcd; margin-right: 55px; }
.outer { margin-left: 15px; height: 737px; }
.outer .thumb { flex: none; height: 653px; margin-bottom: 50px; }

.middle { width: 579px; flex: none; border-right: 1px solid #ddd; padding-left: 15px; }
.head { height: 81px; display: flex; box-sizing: border-box; padding-top: 10px; }
.head > div:first-child { width: 480px; padding-top: 10px; }
.head p { font-size: 15.600px; margin-top: 7px; padding-left: .5px; }
.round { width: 40px; height: 40px; border-radius: 50%; display: flex; align-items: center; justify-content: center; color: rgba(255, 255, 255, .84); box-shadow: 0 1px 2px rgba(0, 0, 0, .4); }
.round.save { background: #4caf50; margin-right: 4px; }
.round.del { background: #f44336; }
.row { display: flex; font-size: 16px; }
.row label { width: 118.500px; display: flex; justify-content: flex-end; height: 20px; margin-top: 11px; white-space: nowrap; }
.row label svg { margin: -9px -1px 0 0; color: #757575; }
.field { width: 415px; margin-left: 30.500px; box-sizing: border-box; color: #555; }
.line { border-bottom: 1px solid #d2d2d2; }
.r-name { height: 44px; }
.r-name label { margin-top: 6px; }
.r-name .field { height: 39px; padding-top: 11px; }
.r-mat { height: 70px; }
.tags { height: 65px; display: flex; padding: 11px 0 0 18px; font-size: 14px; color: #212121; }
.tags svg { color: #bbb; margin: 0 32px 0 6px; }
.r-dim { height: 45px; }
.dims, .dates { display: flex; height: 40px; }
.num { width: 78px; height: 40px; border-bottom: 1px solid #d2d2d2; box-sizing: border-box; display: flex; }
.num span { width: 63px; text-align: center; padding-top: 13px; }
.spin-svg { margin-top: 14px; }
.dims i, .dates i { font-style: normal; font-size: 12px; width: 32px; text-align: center; padding-top: 16px; }
.dims i:nth-of-type(2) { width: 33px; }
.unit { margin: 12px 0 0 41px; font-size: 14px; color: #212121; display: flex; gap: 3px; }
.unit svg { margin-top: 9px; }
.r-date { height: 54px; }
.c1, .c2 { color: #212121; margin-top: 21px; }
.c1 { margin-left: 42px; }
.c2 { margin-left: 41px; }
.num.wide { width: 102px; }
.c1 + .num { margin-left: 41px; }
.num.wide span { width: 87px; }
.dates i { width: 29px; font-size: 15px; padding-left: 1px; box-sizing: border-box; }
.r-sel { height: 45px; }
.pick { height: 41px; margin-left: 31.500px; display: flex; justify-content: flex-end; color: #212121; padding-right: 10px; }
.pick svg:last-child { margin-top: 21px; }
.r-phase { height: 44px; }
.r-phase .pick { height: 40px; }
.pick span { flex: 1; padding-top: 12px; }
.r-phase .pick > svg:first-of-type { margin: 14px 17px 0 0; }
.r-phase .pick svg:last-child { margin-top: 20px; }
.badge { position: relative; }
.badge b { position: absolute; width: 8px; height: 8px; border-radius: 50%; background: #32cd32; left: 10px; top: 1px; }
.r-note { height: 114px; }
.r-note .field { height: 79px; padding-top: 10px; line-height: 23px; white-space: nowrap; }
.r-mod label { margin-top: 5px; }
.r-mod { height: 62px; }
.r-mod .field { padding-top: 11px; color: #333; }
.actions { display: flex; padding-left: 172px; }
.actions > div { display: flex; }
.actions svg { margin-top: 2px; }
.actions span { margin: 6px 0 0 4px; letter-spacing: -.15px; }
.act-save { color: #4caf50; width: 129px; }
.act-del { color: #f44336; }

.right { width: 549px; flex: none; margin-left: 15px; }
.tabs { height: 43px; background: #009688; color: #fff; display: flex; }
.tabs > div { display: flex; }
.tabs svg { margin-top: 10px; }
.tabs span { margin: 14px 0 0 4px; }
.t1 { margin-left: 15px; width: 85px; }
.t2 { width: 88px; }
.t3 span { letter-spacing: .1px; }
.map { position: relative; height: 683px; margin-top: 11px; overflow: hidden; }
.way { fill: none; stroke-linejoin: round; }
.water { stroke: #a9d3e2; stroke-width: 3px; }
.border { stroke: #cfa3cf; stroke-width: 3.500px; stroke-dasharray: 10 7; }
.primary { stroke: #f8cf93; stroke-width: 3.500px; }
.trunk { stroke: #f59a7a; stroke-width: 3.500px; }
.motorway { stroke: #e56c8d; stroke-width: 4px; }
.minor { stroke: #858585; stroke-width: 3px; }
.rail { stroke: #777; stroke-width: 3.500px; }
.zones path { fill: url(#hatch); stroke: rgba(240, 130, 125, .5); stroke-width: 3.500; stroke-linejoin: round; }
.spots circle { fill: #12a5f8; stroke: #666; stroke-width: 1; }
.cities text { font-family: 'Noto Sans', sans-serif; text-anchor: middle; fill: #222; stroke: rgba(255, 255, 255, .75); stroke-width: 2px; paint-order: stroke; }
.ctl { position: absolute; background: #fff; border-radius: 4px; box-shadow: 0 1px 5px rgba(0, 0, 0, .65); display: flex; flex-direction: column; width: 26px; }
.zoomer { left: 10px; top: 10px; color: #000; font: bold 18px/26px 'Liberation Sans', Arial, sans-serif; text-align: center; }
.zoomer span { height: 26px; line-height: 26px; }
.zoomer span:first-child { height: 25px; line-height: 28px; border-bottom: 1px solid #ccc; }
.full { left: 10px; top: 72px; height: 26px; align-items: center; justify-content: center; }
.layers { right: 10px; top: 10px; width: 36px; height: 36px; align-items: center; justify-content: center; }
.draw { right: 10px; top: 542px; }
.draw svg { width: 26px; height: 25px; border-bottom: 1px solid #ccc; }
.draw svg:last-child { border: 0; height: 26px; }
.edit { right: 10px; top: 658px; height: 26px; }
</style>
